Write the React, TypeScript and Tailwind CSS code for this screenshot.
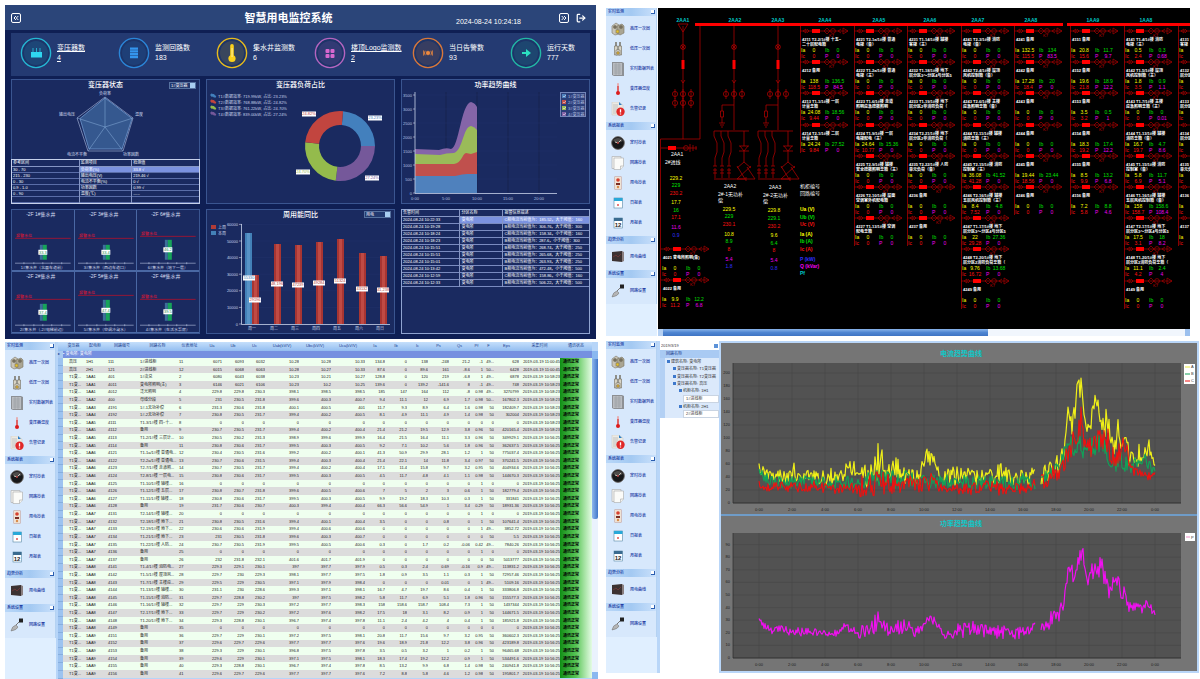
import type { ReactNode } from "react";
import { ChevronsLeft, ChevronsRight, LogOut } from "lucide-react";

/* ---------- dashboard data ---------- */

const stats = [
  { label: "变压器数", value: "4", color: "#25b7d3", icon: "transformer", link: true },
  { label: "监测回路数", value: "183", color: "#2b86d8", icon: "circuit", link: false },
  { label: "集水井监测数", value: "6", color: "#e8bb1d", icon: "thermo", link: false },
  { label: "楼顶Logo监测数", value: "2", color: "#b565c0", icon: "logo", link: true },
  { label: "当日告警数", value: "93", color: "#d9783a", icon: "alarm", link: false },
  { label: "运行天数", value: "777", color: "#22b8a5", icon: "arrow", link: false },
];

const stateRows = [
  ["30 - 70", "负荷率(%)", "33.8 √"],
  ["215 - 230", "输出电压(V)", "219.46 √"],
  ["0 - 30", "电流不平衡(%)", "0 √"],
  ["0.9 - 1.0", "功率因数", "0.99 √"],
  ["0 - 90", "温度(℃)", "-----"],
  ["", "", ""],
];

const shares = [
  { text: "T1#数据效率: 719.99kW, 占比: 23.23%", color: "#4380bd" },
  { text: "T2#数据效率: 768.88kW, 占比: 24.82%", color: "#c2453f" },
  { text: "T3#数据效率: 761.22kW, 占比: 24.70%", color: "#94bb4c" },
  { text: "T4#数据效率: 839.00kW, 占比: 27.24%", color: "#75589a" },
];

const donut = [
  { from: 5, to: 90, color: "#4380bd", label: "23.23%", x: 376, y: 118 },
  { from: 90, to: 187, color: "#75589a", label: "27.24%", x: 373, y: 178 },
  { from: 187, to: 276, color: "#94bb4c", label: "24.70%", x: 304, y: 172 },
  { from: 276, to: 365, color: "#c2453f", label: "24.82%", x: 310, y: 114 },
];

const wells = [
  { title: "-2F 1#集水井", foot: "1#集水井（北面车道前）", line: 28, top: 35, bottom: 50, value: "33.3" },
  { title: "-2F 3#集水井", foot: "3#集水井（西边车道口）", line: 28, top: 35, bottom: 50, value: "33.4" },
  { title: "-2F 6#集水井", foot: "6#集水井（地下一层）", line: 26, top: 30, bottom: 50, value: "46.2" },
  { title: "-2F 2#集水井", foot: "2#集水井（-2#电梯前边）", line: 27, top: 32, bottom: 49, value: "37.4" },
  { title: "-2F 5#集水井", foot: "5#集水井（空调冷凝水）", line: 23, top: 28, bottom: 49, value: "47.4" },
  { title: "-2F 4#集水井", foot: "4#集水井（生活水泵房）", line: 27, top: 31, bottom: 49, value: "39.5" },
];

const weekBars = [
  { x: 253, top: 274, label: "29196", ly: 299, day: "周一" },
  { x: 275, top: 243, label: "48,196", ly: 283, day: "周二" },
  { x: 296, top: 244, label: "47239", ly: 284, day: "周三" },
  { x: 317, top: 241, label: "49284", ly: 282, day: "周四" },
  { x: 338, top: 238, label: "51324", ly: 280, day: "周五" },
  { x: 360, top: 252, label: "43132", ly: 288, day: "周六" },
  { x: 381, top: 255, label: "41,238", ly: 289, day: "周日" },
];

const alarms = [
  ["10:22:33", "C相电流当前值为：185.52，大于阈值：160"],
  ["10:19:28", "B相电流当前值为：306.76，大于阈值：300"],
  ["10:18:24", "C相电流当前值为：158.34，小于阈值：160"],
  ["10:18:23", "B相电流当前值为：287.6，小于阈值：300"],
  ["10:15:51", "B相电流当前值为：268.74，大于阈值：250"],
  ["10:15:51", "B相电流当前值为：265.68，大于阈值：250"],
  ["10:15:01", "B相电流当前值为：263.93，大于阈值：250"],
  ["10:13:42", "B相电流当前值为：472.48，小于阈值：500"],
  ["10:12:59", "C相电流当前值为：158.86，小于阈值：160"],
  ["10:12:33", "B相电流当前值为：506.22，大于阈值：500"],
];

/* ---------- sidebar data ---------- */

const menu = [
  {
    title: "实时监测",
    items: [
      ["高压一次图", "gear"],
      ["低压一次图", "fuse"],
      ["实时数据列表", "cabinet"],
      ["变压器温度", "temp"],
      ["告警记录", "alert"],
    ],
  },
  {
    title: "系统报表",
    items: [
      ["定时抄表", "clock"],
      ["回路抄表", "paper"],
      ["用电抄表", "meter"],
      ["日报表", "day"],
      ["月报表", "month"],
    ],
  },
  { title: "趋势分析", items: [["用电曲线", "screen"]] },
  { title: "系统设置", items: [["回路设置", "plug"]] },
];

/* ---------- single line diagram data ---------- */

// title line 1 | title line 2 | Ia | Ib | Ic | P
const feederColumns = [
  {
    x: 800,
    rows: [
      "4211 T2-2/1#楼 十五~|二十层配电箱|0|0|0|0",
      "4212 备用||138|136.5|118.5|84.5",
      "4213 T1-1/1#楼 一层|计量总箱|24.08|18.56|9.44|0",
      "4214 T2-1/1#楼 二层|计量总箱|24.24|27.52|9.84|0",
    ],
  },
  {
    x: 854,
    rows: [
      "4221 T2-1a/1#楼 普通|电梯（备）|0|0|0|0",
      "4222 T1-2a/1#楼 普通|电梯（主）|0|0|0|0",
      "4223 T1-6/1#楼 走道|照明应急疏散照明|0|0|0|0",
      "4224 T1-9/1#楼 一层|电梯配电（主）|24.64|15.36|10.77|0",
      "4225 T2-9/1#楼 辅楼|安全疏散照明总箱（主）|0|0|0|0",
      "4226 T2-10/1#楼 屋面|空调室外机配电箱|0|0|0|0",
      "4227 T1-13/1#楼 空调|配电总箱|0|0|0|0",
    ],
  },
  {
    x: 907,
    rows: [
      "4231 T1-14/1#楼 辅楼|客梯（主）|0|0|0|0",
      "4232 T1-18/1#楼 地下|层分区3～分区4与分区5|0|0|0|0",
      "4233 T1-19/1#楼 地下|层分区2非消防负荷（|0|0|0|0",
      "4234 T2-21/1#楼 地下|层分区2非消防负荷（|0|0|0|0",
      "4235 T2-22/1#楼 人防|单元负荷（备）|0|0|0|0",
      "4236 备用||0|0|0|0",
      "4237 备用||0|0|0|0",
    ],
  },
  {
    x: 961,
    rows: [
      "4241 T2-3/1#楼 消防|电梯（备）|0|0|0|0",
      "4242 T2-4/1#楼 屋顶|风机控制箱（备）|0|0|0|0",
      "4243 T2-6/1#楼 主楼|应急照明总箱（备）|0|0|0|0",
      "4244 T2-11/1#楼 辅楼|消防总箱（主）|0|0|0|0",
      "4245 T2-15/1#楼 消防|控制室（主）|36.08|41.52|41.28|0",
      "4246 T2-16/1#楼 辅楼|五层风机控制箱（主）|8.4|4.8|7.52|0",
      "4247 T1-17/1#楼 地下|层分区3～分区4与分区5|22|27.36|29.28|0",
      "4248 T2-20/1#楼 地下|层分区2消防负荷总箱（|9.76|13.68|16.72|0",
      "4249 备用||0|0|0|0",
    ],
  },
  {
    x: 1014,
    rows: [
      "4241 备用||132.5|134|115.5|83.5",
      "4242 备用||17.28|20|18.4|0",
      "4243 备用||0|0|0|0",
      "4244 备用||0|0|0|0",
      "4245 备用||19.44|23.44|18.56|0",
      "4246 备用||0|0|0|0",
    ],
  },
  {
    x: 1070,
    rows: [
      "4151 备用||20.8|11.7|15.6|9.7",
      "4152 备用||19.6|18.9|21.8|12.2",
      "4153 备用||3.5|0.5|3.2|1",
      "4154 备用||18.3|17.4|19.2|12.2",
      "4155 备用||8.5|13.2|9.9|6.8",
      "4156 备用||7.2|8.8|5.8|4.6",
    ],
  },
  {
    x: 1124,
    rows: [
      "4141 T1-4/1#楼 消防|电梯（主）|0.5|0.3|2.4|0.68",
      "4142 T1-5/1#楼 屋顶|风机控制箱（主）|1.8|0.9|3.5|1.1",
      "4143 T1-7/1#楼 主楼|应急照明总箱（主）|0|0|0|0.01",
      "4144 T1-13/1#楼 辅楼|消防总箱（备）|16.7|4.7|19.7|8.6",
      "4145 T1-15/1#楼 消防|控制室（备）|5.8|11.7|6.9|5.1",
      "4146 T1-16/1#楼 辅楼|五层风机控制箱（备）|158|158.6|158.7|108.4",
      "4147 T2-17/1#楼 地下|层分区3～分区4与分区5|17.5|18|3.1|8.2",
      "4148 T1-20/1#楼 地下|层分区2消防负荷总箱（|11.1|2.4|4.2|4",
      "4149 备用||0|0|0|0",
    ],
  },
  {
    x: 1178,
    rows: [
      "4131 T2|客梯|0||0|",
      "4132 T2|层分区|3||0|",
      "4133 T2|层分区|0||0|",
      "4134 T1|层分区|0||0|",
      "4135 T1|单元负|0||0|",
      "4136 备用||0||0|",
      "4137 备用||0||0|",
    ],
  },
];

const busLabels: [string, number][] = [
  ["2AA1", 683], ["2AA2", 735], ["2AA3", 778], ["2AA4", 825], ["2AA5", 879],
  ["2AA6", 930], ["2AA7", 978], ["2AA8", 1031], ["1AA9", 1093], ["1AA8", 1146],
];

const Y = "#ffff00";
const G = "#00e000";
const R = "#ff1010";
const M = "#f000f0";
const B = "#3030ff";
const WIRE = "#a80000";

// text | x | y | colour
const readings: [string, number, number, string][] = [
  ["229.2", 676, 180, Y], ["229", 676, 187, G], ["230.2", 676, 195, R],
  ["17.7", 676, 204, Y], ["16", 676, 212, G], ["17.1", 676, 219, R],
  ["11.6", 676, 229, M], ["0.9", 676, 237, B],
  ["229.5", 729, 211, Y], ["229", 729, 218, G], ["230.1", 729, 226, R],
  ["10.8", 729, 236, Y], ["8.9", 729, 243, G], ["8", 729, 251, R],
  ["5.4", 729, 261, M], ["1.8", 729, 268, B],
  ["229.8", 774, 212, Y], ["229.1", 774, 220, G], ["230.2", 774, 228, R],
  ["9.6", 774, 237, Y], ["6.4", 774, 245, G], ["8", 774, 252, R],
  ["5.4", 774, 262, M], ["0.8", 774, 270, B],
];

const keys: [string, number, string][] = [
  ["Ua (V)", 211, Y], ["Ub (V)", 219, G], ["Uc (V)", 226, R],
  ["Ia (A)", 236, Y], ["Ib (A)", 243, G], ["Ic (A)", 251, R],
  ["P (kW)", 261, B], ["Q (kVar)", 268, M], ["Pf", 275, "#00c8c8"],
];

/* ---------- meter table data ---------- */

const columns = [
  { name: "变压器", w: 21 }, { name: "配电柜", w: 22 }, { name: "回路编号", w: 32 },
  { name: "回路名称", w: 39 }, { name: "仪表地址", w: 25 }, { name: "Ua", w: 20 },
  { name: "Ub", w: 22 }, { name: "Uc", w: 21 }, { name: "Uab(kV/V)", w: 34 },
  { name: "Ubc(kV/V)", w: 32 }, { name: "Uca(kV/V)", w: 34 }, { name: "Ia", w: 20 },
  { name: "Ib", w: 22 }, { name: "Ic", w: 21 }, { name: "Ps", w: 21 },
  { name: "Qs", w: 21 }, { name: "Pf", w: 13 }, { name: "F", w: 11 },
  { name: "Eps", w: 25 }, { name: "采集时间", w: 41 }, { name: "通讯状态", w: 32 },
];

const zero = "0|0|0|0|0|0|0|0|0|0|0";
const meterRows = [
  "1H1|111|1#进线柜|6071|6093|6032|10.28|10.28|10.33|134.8|0|138|-248|21.2|-1|49...|628",
  "2H1|121|2#进线柜|6015|6068|6063|10.28|10.27|10.33|87.6|0|89.6|161|-8.6|1|50...|6428",
  "1AA1|401|1#次总|6080|6043|6038|10.23|10.21|10.27|128.8|0|120|219|-6.8|1|49...|6878",
  "1AA1|4011|变电所照明(主)|6146|6021|6106|10.23|10.2|10.25|139.6|0|139.2|-141.6|8|-1|49...|748",
  "1AA1|4012|泛光照明|229.8|229.8|230.3|398.1|398.5|398.5|185|147|164|112|-8|0.98|49...|3270799",
  "1AA2|400|母线分段|231|230.5|231.8|399.6|400.3|400.7|9.4|11.1|12|6.9|1.7|0.98|50...|167802.3",
  "1AA3|4191|1#-1无功补偿|231.3|230.6|231.8|400.1|400.5|401|11.7|9.3|8.9|6.4|1.6|0.98|50|182409.7",
  "1AA4|4192|1#-2无功补偿|230.8|230.5|231.7|399.4|400.2|400.5|8.1|4.9|11.1|4.9|1.4|0.98|50|302004",
  `1AA5|4111|T1-3/1#楼 四~十...|${zero}|0|0|0`,
  "1AA5|4112|备用|230.7|230.5|231.7|399.4|400.2|400.4|21.4|21.2|19.5|12.9|3.8|0.96|50|420165.4",
  "1AA5|4113|T1-2/1#楼 三层计...|230.5|230.2|231.3|398.9|399.6|399.9|16.4|21.5|16.4|11.1|3.3|0.96|50|349929.1",
  "1AA5|4114|备用|230.8|230.6|231.7|399.5|400.3|400.5|9.2|7.1|10.2|5.6|1.8|0.96|50|362637.5",
  "1AA6|4121|T1-1a/1#楼 普通电...|230.4|230.5|231.6|399.2|400.2|400.1|41.3|50.9|29.9|28.1|1.2|1|50|775037.4",
  "1AA6|4122|T2-2a/1#楼 普通电...|230.7|230.6|231.5|399.4|400.3|400.4|21.4|22.1|14|11.8|3.4|0.97|50|370241.5",
  "1AA6|4123|T2-7/1#楼 走道照...|230.7|230.5|231.7|399.4|400.2|400.4|17.1|11.4|15.8|9.7|3.2|0.95|50|404934.6",
  "1AA6|4124|T2-8/1#楼 一层电...|230.8|230.6|231.7|399.5|400.3|400.5|4.5|11.7|4.8|4.1|1.1|0.98|50|144670.3",
  `1AA6|4125|T1-10/1#楼 辅楼...|${zero}|1|0|0`,
  "1AA6|4126|T1-12/1#楼 五层...|230.8|230.7|231.8|399.6|400.5|400.6|7|5|2|3|0.6|1|50|182779.4",
  "1AA6|4127|T1-11/1#楼 辅楼...|230.8|230.6|231.7|399.5|400.3|400.5|9.9|19.2|18.3|10.3|0.3|1|50|331841",
  "1AA6|4128|备用|231.7|230.6|230.7|400.3|399.4|400.4|66.3|56.6|54.9|1|3.4|0.29|50|18931.36",
  `1AA7|4131|T2-14/1#楼 辅楼...|${zero}|1|0|0`,
  "1AA7|4132|T2-18/1#楼 地下...|230.8|230.5|231.6|399.4|400.1|400.4|3.5|0|0|0.8|0|1|50|107641.4",
  "1AA7|4133|T2-19/1#楼 地下...|230.6|230.6|231.9|399.4|400.6|400.6|0|0|0|0|0|1|49...|3852.72",
  "1AA7|4134|T1-21/1#楼 地下...|231|230.5|231.8|399.6|400.3|400.7|0|0|0|0|0|0|50|5.5",
  "1AA7|4135|T1-22/1#楼 人防...|230.7|230.5|231.9|399.5|400.5|400.6|0.3|0|1.7|0.2|-0.06|0.42|49...|7840.26",
  `1AA7|4136|备用|${zero}|1|0|0`,
  "1AA7|4137|备用|232|231.8|232.1|401.6|401.7|401.9|0|0|0|0|0|0|50|5013777",
  "1AA8|4141|T1-4/1#楼 消防电...|229.3|229.1|230.1|397|397.7|397.9|0.5|0.3|2.4|0.69|-0.16|0.9|49...|113831.2",
  "1AA8|4142|T1-5/1#楼 屋顶风...|229.7|230|229.3|398.1|397.7|397.5|1.8|0.9|3.5|1.1|0.3|1|50|72957.46",
  "1AA8|4143|T1-7/1#楼 主楼应...|229.5|229|230.5|397.1|397.9|398.4|0|0|0|0.01|0|1|49...|5109.16",
  "1AA8|4144|T1-13/1#楼 辅楼...|231.1|230|228.6|399.3|397.1|398.1|16.7|4.7|19.7|8.6|0.4|1|50|333806.8",
  "1AA8|4145|T1-15/1#楼 消防...|229.7|228.8|230.2|397|397.5|398.2|5.8|11.7|6.9|5.1|1.8|0.96|50|155577.3",
  "1AA8|4146|T1-16/1#楼 辅楼...|229.7|229|230.3|397.2|397.7|398.3|158|158.6|158.7|108.4|7.3|1|50|1437344",
  "1AA8|4147|T2-17/1#楼 地下...|229.7|229|230.2|397.2|397.6|398.2|17.5|18|3.1|8.2|0.9|1|50|144671.5",
  "1AA8|4148|T1-20/1#楼 地下...|229.3|228.8|230.1|396.7|397.4|397.8|11.1|2.4|4.2|4|0.4|1|50|185921.8",
  `1AA8|4149|备用|${zero}|0|0|0`,
  "1AA9|4151|备用|229.7|229|230.1|397.2|397.5|398.1|20.8|11.7|15.6|9.7|3.2|0.95|50|360602.3",
  "1AA9|4152|备用|229.6|229.7|229.6|397.7|397.7|397.6|19.6|18.9|21.8|12.2|3.8|0.96|50|423189.8",
  "1AA9|4153|备用|229.3|229|230.1|396.8|397.5|397.8|3.5|0.5|3.2|1|0.2|1|50|96465.68",
  "1AA9|4154|备用|229.6|229|230.1|397.1|397.5|398.1|18.3|17.4|19.2|12.2|0.9|1|50|534491.6",
  "1AA9|4155|备用|229.3|228.8|230.1|396.7|397.4|397.8|8.5|13.2|9.9|6.8|1.4|0.98|50|240941.8",
  "1AA9|4156|备用|229.6|229.7|229.6|397.7|397.7|397.6|7.2|8.8|5.8|4.6|1.2|0.98|50|195801.7",
];

const cells = meterRows.map((row, i) => {
  const parts = row.split("|");
  const address = i < 2 ? 11 + i : i;
  const time = i < 2 ? "11:00:45" : i < 10 ? "10:58:23" : "10:56:25";
  return [
    i < 2 ? "高压" : "T1变...",
    ...parts.slice(0, 3),
    String(address),
    ...parts.slice(3),
    `2019-03-19 ${time}`,
  ];
});

/* ---------- trend data ---------- */

// x, mean y, spread
type Key = [number, number, number];

const yellowKeys: Key[] = [
  [759, 469, 7], [775, 477, 9], [800, 476, 8], [840, 479, 9], [846, 466, 12], [852, 468, 14],
  [857, 480, 9], [870, 477, 16], [878, 464, 22], [885, 478, 11], [897, 466, 13], [903, 476, 11],
  [920, 478, 12], [926, 453, 7], [934, 464, 9], [940, 478, 8], [960, 475, 14], [985, 478, 10],
  [1005, 470, 14], [1015, 478, 10], [1035, 477, 9], [1048, 472, 14], [1060, 462, 11], [1065, 448, 12],
  [1068, 418, 15], [1073, 424, 15], [1076, 402, 16], [1079, 388, 17], [1083, 400, 14],
  [1086, 426, 6], [1090, 428, 6], [1095, 403, 18], [1101, 416, 15], [1108, 430, 20],
  [1115, 442, 20], [1126, 450, 16], [1134, 462, 9], [1140, 452, 17], [1149, 450, 13], [1155, 468, 5],
];
const greenKeys: Key[] = [
  [759, 474, 6], [775, 482, 7], [840, 483, 7], [880, 479, 12], [925, 481, 9], [985, 483, 8],
  [1035, 483, 8], [1058, 468, 9], [1068, 447, 11], [1080, 446, 12], [1087, 455, 8], [1098, 443, 12],
  [1104, 443, 12], [1109, 467, 8], [1120, 461, 12], [1130, 468, 9], [1146, 460, 12], [1155, 472, 4],
];
const redKeys: Key[] = [
  [759, 486, 6], [850, 489, 6], [865, 486, 14], [878, 482, 16], [900, 486, 10], [930, 482, 12],
  [940, 489, 6], [985, 488, 9], [1030, 489, 6], [1045, 476, 14], [1060, 474, 8], [1070, 448, 14],
  [1081, 420, 16], [1086, 450, 12], [1098, 442, 17], [1106, 440, 17], [1115, 456, 17],
  [1125, 446, 15], [1131, 470, 8], [1145, 477, 6], [1155, 476, 6],
];
const magentaKeys: Key[] = [
  [759, 622, 4], [768, 629, 5], [800, 632, 5], [838, 633, 4], [850, 626, 7], [856, 635, 6],
  [870, 626, 12], [880, 620, 12], [888, 629, 8], [903, 626, 9], [920, 633, 7], [927, 617, 4],
  [936, 623, 5], [943, 635, 5], [960, 630, 9], [985, 630, 9], [1020, 634, 7], [1035, 626, 6],
  [1046, 622, 11], [1060, 614, 10], [1065, 596, 7], [1068, 572, 10], [1074, 574, 11], [1080, 555, 9],
  [1083, 554, 9], [1087, 582, 6], [1095, 566, 12], [1102, 568, 12], [1109, 592, 10], [1115, 584, 14],
  [1122, 590, 10], [1131, 608, 9], [1142, 608, 6], [1148, 604, 6], [1155, 614, 4],
];

function trendPath(points: Key[], seed: number, skew: number) {
  let s = seed;
  const rand = () => {
    s = (s * 16807) % 2147483647;
    return s / 2147483647;
  };
  let path = "";
  let pen = "M";
  for (let x = 759; x <= 1155; x += 1) {
    if (x > 1035 && x < 1041) {
      pen = "M";
      continue;
    }
    const i = Math.max(1, points.findIndex((p) => p[0] >= x));
    const [x0, y0, a0] = points[i - 1];
    const [x1, y1, a1] = points[i];
    const t = (x - x0) / (x1 - x0);
    const amp = a0 + (a1 - a0) * t;
    const n = rand() * 2 - 1;
    const spike = rand() > 0.86 ? skew * rand() : 0;
    const y = y0 + (y1 - y0) * t + n * amp * 0.85 - spike * amp;
    path += `${pen}${x} ${y.toFixed(1)}`;
    pen = "L";
  }
  return path;
}

/* ---------- dashboard ---------- */

const StatIcon = ({ name, color }: { name: string; color: string }) => (
  <svg viewBox="0 0 32 32" className="size-8 shrink-0">
    <circle cx="16" cy="16" r="14.6" fill="#1d3468" stroke={color} strokeWidth="1.4" />
    <circle cx="16" cy="16" r="12" fill={color} opacity="0.14" />
    {name === "transformer" && (
      <g fill="#2fd6f0">
        <rect x="11" y="15" width="11" height="5.5" />
        <path d="M12.5 11h1v4h-1zM16 11h1v4h-1zM19.5 11h1v4h-1z" opacity="0.7" />
      </g>
    )}
    {name === "circuit" && (
      <g fill="#3496ee">
        <path d="M12 10.5h8v2.2h-8zM12 13.2h8v2.2h-8zM12 15.9h8v2.2h-8zM12 18.6h8v2.6h-8z" />
      </g>
    )}
    {name === "thermo" && (
      <g fill="#fbd01b">
        <rect x="14.2" y="7" width="3.6" height="15" rx="1.8" />
        <circle cx="16" cy="21.5" r="3.6" />
        <rect x="15.6" y="11" width="0.9" height="9" fill="#fff3b0" />
      </g>
    )}
    {name === "logo" && (
      <g fill="#d868cf">
        <rect x="11.5" y="12" width="4" height="4" rx="1" />
        <rect x="16.5" y="12" width="4" height="4" rx="1" />
        <rect x="11.5" y="17" width="4" height="4" rx="1" />
        <rect x="16.5" y="17" width="4" height="4" rx="1" />
      </g>
    )}
    {name === "alarm" && (
      <g fill="none" stroke="#f08a3e" strokeWidth="0.8">
        <circle cx="16" cy="16" r="1.8" fill="#f08a3e" />
        <path d="M13.2 13.8a3.6 3.6 0 0 0 0 4.4M18.8 13.8a3.6 3.6 0 0 1 0 4.4M11.6 13.4v5.2M20.4 13.4v5.2" />
      </g>
    )}
    {name === "arrow" && <path d="M12 15h4v-3l5 4-5 4v-3h-4z" fill="#2ce0c0" />}
  </svg>
);

const Panel = ({ title, control, children }: { title: string; control?: ReactNode; children: ReactNode }) => (
  <section className="border border-[#3a5590] bg-[#1a2a60]">
    <div className="grid h-[10px] grid-cols-[1fr_auto_1fr] items-center">
      <h2 className="col-start-2 text-[7px] leading-[10px] font-medium">{title}</h2>
      <div className="flex justify-end pr-[3px]">{control}</div>
    </div>
    {children}
  </section>
);

const MiniSelect = ({ label, value }: { label: string; value: string }) => (
  <div className="flex h-[7px] items-center border border-[#56719f]">
    <select aria-label={label} className="w-[20px] appearance-none bg-[#22386f] pl-px text-[4px] leading-[5px] outline-none">
      <option>{value}</option>
    </select>
    <span className="size-[5px] bg-[#a8cdf0]" />
  </div>
);

const ValueTag = ({ x, y, text, color, w = 12 }: { x: number; y: number; text: string; color: string; w?: number }) => (
  <g>
    <rect x={x - w / 2} y={y - 2.5} width={w} height="5" fill="#fff" />
    <text x={x} y={y + 1.4} fontSize="4" textAnchor="middle" fill={color}>{text}</text>
  </g>
);

const arc = (from: number, to: number) => {
  const pt = (deg: number, r: number) => {
    const a = ((deg - 90) * Math.PI) / 180;
    return `${(341 + r * Math.cos(a)).toFixed(2)} ${(146 + r * Math.sin(a)).toFixed(2)}`;
  };
  return `M${pt(from, 35)}A35 35 0 0 1 ${pt(to, 35)}L${pt(to, 21)}A21 21 0 0 0 ${pt(from, 21)}Z`;
};

const RadarPanel = () => (
  <Panel title="变压器状态" control={<MiniSelect label="变压器" value="1#变压器" />}>
    <svg viewBox="12 90 187 70" className="block w-full" fill="#d5def0" fontSize="4">
      <path d="M105 97L133 118L123 151L88 151L77 118Z" fill="none" stroke="#9aa9cf" strokeWidth="0.7" />
      <path d="M105 98L132 118.5L122 149L89 149L80 118.5Z" fill="#35588f" stroke="#6f98cf" strokeWidth="0.8" />
      <path d="M105 127V97M105 127L133 118M105 127L123 151M105 127L88 151M105 127L77 118" stroke="#8ab0dc" strokeWidth="0.5" />
      <text x="105" y="95" textAnchor="middle">负荷率</text>
      <text x="135" y="116">温度</text>
      <text x="131" y="156" textAnchor="middle">功率因数</text>
      <text x="77" y="156" textAnchor="middle">电流不平衡</text>
      <text x="75" y="116" textAnchor="end">输出电压</text>
    </svg>
    <table className="w-full table-fixed border-collapse text-left text-[4px] leading-[5px] outline outline-[#c5d0ea]">
      <thead>
        <tr className="h-[6px]">
          <th className="w-[36%] border-b border-[#8696c4] pl-px font-normal">参考区间</th>
          <th className="w-[28%] border-b border-l border-[#8696c4] pl-px font-normal">监测项目</th>
          <th className="border-b border-l border-[#8696c4] pl-px font-normal">检测值</th>
        </tr>
      </thead>
      <tbody>
        {stateRows.map((row, i) => (
          <tr key={i} className="h-[6px] border-b border-[#5a6da8]">
            {row.map((cell, j) => (
              <td key={j} className={`pl-px ${j > 0 ? "border-l border-[#8696c4]" : ""} ${i === 0 && j > 0 ? "bg-[#7b92e0]" : ""}`}>
                {cell}
              </td>
            ))}
          </tr>
        ))}
      </tbody>
    </table>
  </Panel>
);

const SharePanel = () => (
  <Panel title="变压器负荷占比">
    <svg viewBox="208 90 187 112" className="block w-full" fontSize="4" fill="#c9d3ea">
      {shares.map((s, i) => (
        <g key={s.text}>
          <path d={`M212 ${94 + i * 6}q4 0 5 3l-2 0q-1-1-3-1z`} fill={s.color} stroke={s.color} />
          <text x="219" y={98 + i * 6}>{s.text}</text>
        </g>
      ))}
      {donut.map((d) => (
        <g key={d.label}>
          <path d={arc(d.from, d.to)} fill={d.color} />
          <ValueTag x={d.x} y={d.y} text={d.label} color={d.color} w={14} />
        </g>
      ))}
    </svg>
  </Panel>
);

const PowerPanel = () => (
  <Panel title="功率趋势曲线">
    <svg viewBox="403 90 187 112" className="block w-full" fontSize="4" fill="#b6c3e0">
      <path d="M447 92V193M478 92V193M509 92V193M540 92V193" stroke="#16234f" strokeWidth="1" />
      {[0, 500, 1000, 1500, 2000, 2500, 3000, 3500].map((v, i) => (
        <g key={v}>
          <path d={`M414 ${193 - i * 14}h144`} stroke="#22336a" strokeWidth="0.5" />
          <path d={`M414 ${193 - i * 14}h2`} stroke="#c9d3ea" strokeWidth="0.6" />
          <text x="413" y={194.5 - i * 14} textAnchor="end">{v}</text>
        </g>
      ))}
      <path d="M416 149L440 150Q447 147 452 149C460 148 462 104 472 102Q476 103 478 107V193H416Z" fill="#8565a8" />
      <path d="M416 154L441 155Q447 153 455 153C464 150 464 127 472 126Q476 127 478 130V193H416Z" fill="#9abb59" />
      <path d="M416 164H455C463 163 463 154 467 153L472 154 478 152V193H416Z" fill="#c0504d" />
      <path d="M416 176H456Q464 174 468 174H478V193H416Z" fill="#4f81bd" />
      <path d="M416 92V193.5H558" fill="none" stroke="#c9d3ea" strokeWidth="0.8" />
      {["0:00", "5:00", "10:00", "15:00", "20:00"].map((t, i) => (
        <text key={t} x={416 + i * 31} y="200" textAnchor="middle">{t}</text>
      ))}
      <rect x="561.5" y="92.5" width="25" height="24" fill="#2b3e78" stroke="#7486b8" />
      {["1#变压器", "2#变压器", "3#变压器", "4#变压器"].map((t, i) => (
        <g key={t}>
          <rect x="563" y={94 + i * 6} width="4" height="4" fill={["#4f81bd", "#c0504d", "#9abb59", "#8565a8"][i]} />
          <path d={`M564 ${96 + i * 6}l1 1 2-2`} stroke="#fff" strokeWidth="0.5" fill="none" />
          <text x="569" y={98 + i * 6}>{t}</text>
        </g>
      ))}
    </svg>
  </Panel>
);

const WellsPanel = () => (
  <div className="grid grid-cols-3 gap-px border border-[#3a5590] bg-[#4a68a4]">
    {wells.map((w) => (
      <svg key={w.title} viewBox="0 0 62 61" className="block w-full bg-[#1a2a60]" fontSize="4" fill="#d5def0" textAnchor="middle">
        <text x="29" y="6" fontSize="5">{w.title}</text>
        <text x="4" y={w.line - 1} fill="#ff1028" textAnchor="start">报警水位</text>
        <path d={`M3 ${w.line + 0.5}H59`} stroke="#b3122c" strokeWidth="0.8" />
        <rect x="28" y={w.top} width="3" height={w.bottom - w.top} fill="#3d6f9a" />
        <rect x="31" y={w.top} width="4" height={w.bottom - w.top} fill="#17a35a" />
        <ValueTag x={31} y={(w.top + w.bottom) / 2} text={w.value} color="#178a50" w={9} />
        <path d="M3 53.5H59M12 52.5v2M22 52.5v2M31 52.5v2M40 52.5v2M50 52.5v2" stroke="#b8c5e2" strokeWidth="0.6" />
        <text x="31" y="59">{w.foot}</text>
      </svg>
    ))}
  </div>
);

const WeekPanel = () => (
  <Panel title="周用能同比" control={<MiniSelect label="能源类型" value="用电" />}>
    <svg viewBox="208 219 187 113" className="block w-full" fontSize="4" fill="#c9d3ea">
      <rect x="212" y="224" width="5" height="4" fill="#b03c38" />
      <text x="219" y="228">上周</text>
      <rect x="212" y="230" width="5" height="4" fill="#4381b8" />
      <text x="219" y="234">本周</text>
      {[0, 10000, 20000, 30000, 40000, 50000, 60000].map((v, i) => (
        <g key={v}>
          <path d={`M240 ${323 - i * 16.6}h3`} stroke="#c9d3ea" strokeWidth="0.6" />
          <path d={`M243 ${323 - i * 16.6}h148`} stroke="#22336a" strokeWidth="0.5" />
          <text x="239" y={324.5 - i * 16.6} textAnchor="end">{v}</text>
        </g>
      ))}
      <path d="M242.5 223V323.5H391" fill="none" stroke="#c9d3ea" strokeWidth="0.8" />
      <rect x="246" y="232" width="7" height="91" fill="#4381b8" />
      <rect x="248" y="232" width="3" height="91" fill="#5893c6" />
      {weekBars.map((b) => (
        <g key={b.day}>
          <rect x={b.x} y={b.top} width="7" height={323 - b.top} fill="#a83532" />
          <rect x={b.x + 2} y={b.top} width="3" height={323 - b.top} fill="#bf4a44" />
          <ValueTag x={b.x + 3} y={b.ly} text={b.label} color="#b03c38" />
          <text x={b.x} y="329" textAnchor="middle">{b.day}</text>
        </g>
      ))}
      <ValueTag x={250} y={277} text="55330" color="#4381b8" />
    </svg>
  </Panel>
);

const AlarmPanel = () => (
  <section className="border border-[#8fa3d0] bg-[#1a2a60]">
    <table className="w-full table-fixed border-collapse text-left text-[4px] leading-[6px] whitespace-nowrap">
      <thead>
        <tr className="h-[7px] border-b border-[#8696c4]">
          <th className="w-[31%] pl-px font-normal">告警时间</th>
          <th className="w-[23%] border-l border-[#8696c4] pl-px font-normal">分区名称</th>
          <th className="border-l border-[#8696c4] pl-px font-normal">报警信息描述</th>
        </tr>
      </thead>
      <tbody>
        {alarms.map(([time, text], i) => (
          <tr key={i} className="h-[7px] border-b border-[#7a8bc0]">
            <td className="pl-px">2024-08-24 {time}</td>
            <td className={`border-l border-[#8696c4] pl-px ${i === 0 ? "bg-[#7b92e0]" : ""}`}>变电所</td>
            <td className={`border-l border-[#8696c4] pl-px ${i === 0 ? "bg-[#7b92e0]" : ""}`}>{text}</td>
          </tr>
        ))}
      </tbody>
    </table>
  </section>
);

const Dashboard = () => (
  <section className="mr-[2px] bg-[#0f1f54] pb-[5px] text-white">
    <header className="grid h-[25px] grid-cols-[1fr_auto_1fr] items-center bg-[#2b4579] pr-[10px] pl-[6px]">
      <button aria-label="返回" className="flex size-[10px] items-center justify-center rounded-xs border border-white">
        <ChevronsLeft size={8} strokeWidth={3} />
      </button>
      <h1 className="pr-5 text-[11px] leading-4 font-bold">智慧用电监控系统</h1>
      <div className="flex items-center justify-end">
        <time className="mt-[8px] mr-[38px] text-[7px] leading-[8px] whitespace-nowrap">2024-08-24 10:24:18</time>
        <button aria-label="前进" className="flex size-[10px] items-center justify-center rounded-xs border border-white">
          <ChevronsRight size={8} strokeWidth={3} />
        </button>
        <button aria-label="退出" className="ml-[7px] flex size-[10px] items-center justify-center">
          <LogOut size={10} strokeWidth={3} />
        </button>
      </div>
    </header>
    <div className="mx-[6px] mt-[3px] grid h-[43px] grid-cols-[98fr_98fr_98fr_98fr_98fr_80fr] bg-[#243a72] pl-[9px]">
      {stats.map((s) => (
        <div key={s.label} className="flex h-10 items-center gap-[5px]">
          <StatIcon name={s.icon} color={s.color} />
          <div className="text-[7px] leading-[10px] whitespace-nowrap">
            {s.link ? (
              <a href="#detail" className="block underline">
                <span className="block">{s.label}</span>
                <span>{s.value}</span>
              </a>
            ) : (
              <>
                <p>{s.label}</p>
                <p>{s.value}</p>
              </>
            )}
          </div>
        </div>
      ))}
    </div>
    <div className="mx-[6px] mt-[3px] grid grid-cols-3 gap-x-[6px] gap-y-[5px]">
      <RadarPanel />
      <SharePanel />
      <PowerPanel />
      <WellsPanel />
      <WeekPanel />
      <AlarmPanel />
    </div>
  </section>
);

/* ---------- sidebar ---------- */

const MenuIcon = ({ name }: { name: string }) => (
  <svg viewBox="1 1 14 14" className="size-[14px] shrink-0">
    {name === "gear" && (
      <g stroke="#7b7462" strokeWidth="0.6">
        <path d="M2 5l4-3 3 2v9l-4 1-3-2z" fill="#c9c5b8" />
        <path d="M7 5l5-2 2 2v7l-4 2-3-2z" fill="#aaa592" />
        <circle cx="5" cy="6" r="1.6" fill="#77705e" />
        <circle cx="11" cy="6" r="1.6" fill="#77705e" />
        <rect x="6" y="9" width="3" height="3" fill="#e5c12a" />
      </g>
    )}
    {name === "fuse" && (
      <g stroke="#706a5a" strokeWidth="0.6">
        <path d="M6 1v5M10 1v5" strokeWidth="1.4" />
        <path d="M4.5 5h3v9h-3zM8.5 5h3v9h-3z" fill="#d8d4c6" />
        <path d="M6 9h4v5H6z" fill="#ecece4" />
        <circle cx="8" cy="12" r="1.4" fill="#e5b32a" />
      </g>
    )}
    {name === "cabinet" && (
      <g>
        <path d="M2 1h10l2 1v13H4l-2-1z" fill="#8d9094" />
        <path d="M3 2h9v12H3z" fill="#b9bcc0" />
        <path d="M4 4h7M4 6h7M4 8h7M4 10h7M4 12h7M6 2v12M9 2v12" stroke="#92969b" strokeWidth="0.5" />
      </g>
    )}
    {name === "temp" && (
      <g>
        <rect x="7.2" y="2" width="1.6" height="9" rx="0.8" fill="#e9a0a0" />
        <rect x="7.5" y="5" width="1" height="7" fill="#d81f1f" />
        <circle cx="8" cy="12" r="2" fill="#dc1c1c" />
      </g>
    )}
    {name === "alert" && (
      <g>
        <path d="M2 1h7l4 3v10H2z" fill="#eceae4" stroke="#c9c6bd" strokeWidth="0.5" />
        <path d="M3 4h5M3 6h5M3 8h4M3 10h3M3 12h3" stroke="#a8a8a8" strokeWidth="0.6" />
        <path d="M9 1l3 3H9z" fill="#2b7fc8" />
        <circle cx="10.5" cy="10.8" r="4.2" fill="#e02828" />
        <path d="M10.5 8.2v3.2M10.5 12.4v1" stroke="#fff" strokeWidth="1.3" />
      </g>
    )}
    {name === "clock" && (
      <g>
        <circle cx="8" cy="8" r="6.4" fill="#17181a" stroke="#75706c" strokeWidth="0.8" />
        <path d="M3.2 6a5 4 0 0 1 9.6 0q-5 3-9.6 0" fill="#66625f" opacity="0.7" />
        <path d="M8 8l3-3M8 8l-3-1" stroke="#e8e2d6" strokeWidth="0.8" />
        <circle cx="8" cy="8" r="1" fill="#a33" />
      </g>
    )}
    {name === "paper" && (
      <g fill="#f3f3f0" stroke="#a9a9a9" strokeWidth="0.6">
        <path d="M2 1.5h9v12H2z" />
        <path d="M4 3h9.500v8l-3 3.500H4z" fill="#fbfbf8" />
        <path d="M13.500 11h-3v3.500" />
      </g>
    )}
    {name === "meter" && (
      <g>
        <rect x="4.5" y="1.5" width="7" height="13" rx="0.6" fill="#efe2d4" stroke="#b99" strokeWidth="0.5" />
        <circle cx="8" cy="5" r="1.8" fill="#d7412f" />
        <rect x="6" y="8" width="4" height="2" fill="#7a2d24" />
        <circle cx="8" cy="12" r="1.2" fill="#d98b4a" />
      </g>
    )}
    {(name === "day" || name === "month") && (
      <g>
        <rect x="4" y="3" width="8.500" height="10" fill="#fff" stroke="#5585a3" strokeWidth="0.6" />
        <rect x="4" y="3" width="8.500" height="3" fill={name === "day" ? "#28a8d8" : "#3a6b8f"} />
        {name === "day" ? (
          <circle cx="8" cy="10" r="1" fill="#e05050" />
        ) : (
          <text x="8" y="12" fontSize="6" fontWeight="bold" textAnchor="middle" fill="#222">12</text>
        )}
      </g>
    )}
    {name === "screen" && (
      <g>
        <path d="M2 3l10-1v11L2 12z" fill="#3c3232" />
        <path d="M12 2l2 1v9l-2 1z" fill="#8a7f80" />
        <path d="M3 8l3-2 2 2 3-3" stroke="#8a3a3a" fill="none" strokeWidth="0.6" />
      </g>
    )}
    {name === "plug" && (
      <g>
        <path d="M2 14q1-5 5-6l2 2q-1 3-7 4" fill="#b5b5b5" stroke="#6c6c6c" strokeWidth="0.5" />
        <path d="M7 8l4-4" stroke="#777" strokeWidth="1" />
        <rect x="10" y="1.5" width="4" height="4" fill="#222" />
      </g>
    )}
  </svg>
);

const Sidebar = () => (
  <nav className="w-[51px] shrink-0 bg-[#e0efff] text-[4px] leading-[8px] font-medium text-[#10309c]">
    {menu.map((group) => (
      <div key={group.title} className="border-r border-[#b4d2f2] bg-[#d7e8fc]">
        <h3 className="flex h-[8px] items-center justify-between bg-linear-to-r from-[#b9d7f8] via-[#a3c9f2] to-[#c9e0fb] pl-[2px]">
          {group.title}
          <span className="mr-px size-[4px] border-r border-b border-[#2a5db0] bg-white" />
        </h3>
        <ul className="py-[3px]">
          {group.items.map(([label, icon]) => (
            <li key={label}>
              <a href={`#${icon}`} className="flex h-5 items-center gap-[5px] pl-[5px] whitespace-nowrap">
                <MenuIcon name={icon} />
                {label}
              </a>
            </li>
          ))}
        </ul>
      </div>
    ))}
  </nav>
);

/* ---------- single line diagram ---------- */

const Feeder = ({ x, y, row }: { x: number; y: number; row: string }) => {
  const [title, sub, ia, ib, ic, p] = row.split("|");
  return (
    <g fontSize="5">
      <path
        d={`M${x} ${y}h48M${x + 3} ${y}l3-2v4zM${x + 9} ${y}l-2-2M${x + 9} ${y}l-2 2M${x + 24} ${y}l3-3 3 3-3 3zM${x + 38} ${y}l3-2M${x + 38} ${y}l3 2M${x + 43} ${y - 3}l5 3-5 3z`}
        fill="none"
        stroke={WIRE}
        strokeWidth="0.7"
      />
      <circle cx={x + 33} cy={y} r="2.4" fill="none" stroke={WIRE} strokeWidth="0.7" />
      <rect x={x + 12} y={y - 2} width="8" height="4" fill="#ff0000" />
      <text x={x + 29} y={y + 6} fontSize="4" fill="#c00000">K7</text>
      <text x={x + 2} y={y + 10} fontSize="4" fontWeight="bold" fill="#fff">{title}</text>
      <text x={x + 2} y={y + 15} fontSize="4" fontWeight="bold" fill="#fff">{sub}</text>
      <text x={x + 1} y={y + 21} fill={Y}>Ia</text>
      <text x={x + 14} y={y + 21} fill={Y} textAnchor="middle">{ia}</text>
      <text x={x + 1} y={y + 27} fill={R}>Ic</text>
      <text x={x + 14} y={y + 27} fill={R} textAnchor="middle">{ic}</text>
      {ib && (
        <>
          <text x={x + 25} y={y + 21} fill={G}>Ib</text>
          <text x={x + 38} y={y + 21} fill={G} textAnchor="middle">{ib}</text>
          <text x={x + 25} y={y + 27} fill={M}>P</text>
          <text x={x + 38} y={y + 27} fill={M} textAnchor="middle">{p}</text>
        </>
      )}
    </g>
  );
};

const Riser = ({ x, double }: { x: number; double?: boolean }) => (
  <g fill="none" stroke={WIRE} strokeWidth="0.8">
    <path d={`M${x} 26V${double ? 139 : 130}M${x - 2} 45l2 2 2-2M${x - 2} 49l2-2 2 2M${x - 2} 80l2 3 2-3`} />
    <circle cx={x} cy="47" r="2.4" />
    <rect x={x - 1.5} y="60" width="3" height="9" fill="#ff0000" stroke="none" />
    {(double ? [94, 103] : [94]).map((y) =>
      [-8, 0, 8].map((dx) => (
        <g key={`${y}${dx}`}>
          <circle cx={x + dx} cy={y} r="2.6" />
          <path d={`M${x + dx} ${y - 5}v10`} />
        </g>
      ))
    )}
  </g>
);

const CapacitorBank = ({ x }: { x: number }) => (
  <g fill="none" stroke={WIRE} strokeWidth="0.8">
    <path d={`M${x} 105h-12v6M${x - 13.5} 111h3v6h-3zM${x - 12} 117v6M${x - 15} 123h6M${x - 14} 125h4M${x - 13} 127h2`} />
    <path d={`M${x - 20} 131h35`} />
    {[-20, -13, -6].map((dx) => (
      <path
        key={dx}
        d={`M${x + dx} 131v5l3 7v9l-2 6v8M${x + dx - 1} 166h4M${x + dx + 1} 168v10M${x + dx - 1} 170h4M${x + dx - 1} 173h4`}
      />
    ))}
    <path d={`M${x - 20} 179h32M${x + 12} 177v4`} />
    <path d={`M${x + 10} 131v15M${x + 5} 146h10M${x + 5} 151h10M${x + 6} 146l4 5 4-5M${x + 10} 151v11l-7 6M${x + 10} 162l7 6M${x + 3} 166l8 13M${x + 17} 166l-14 13M${x + 3} 179h18l-8-12`} />
  </g>
);

const Diagram = () => (
  <svg viewBox="658 8 532 321" className="block w-full bg-black">
    {busLabels.map(([name, x]) => (
      <text key={name} x={x} y="22" fontSize="5" fontWeight="bold" textAnchor="middle" fill="#00c8c8">{name}</text>
    ))}
    <path d="M678 24h10l-5 8zM700 26V139H660.5V308M661 148h36M690 144v8M693 145v6M696 146v4" fill="none" stroke={WIRE} strokeWidth="0.8" />
    <circle cx="686" cy="148" r="2.4" fill="none" stroke={WIRE} strokeWidth="0.8" />
    <rect x="668" y="146" width="8" height="4" fill="#ff0000" />
    <Riser x={683} double />
    <Riser x={734} />
    <Riser x={778} />
    <CapacitorBank x={734} />
    <CapacitorBank x={778} />
    {feederColumns.map((col) => (
      <g key={col.x}>
        <path d={`M${col.x + 0.5} 26V${Math.round(28 + col.rows.length * 31.2)}`} stroke={WIRE} strokeWidth="0.8" />
        {col.rows.map((row, i) => (
          <Feeder key={row} x={col.x} y={Math.round(31 + i * 31.2)} row={row} />
        ))}
      </g>
    ))}
    <Feeder x={661} y={249} row="4021 变电所照明(备)||0|0|0|0" />
    <Feeder x={661} y={280} row="4022 备用||9.9|12.2|11.2|6.8" />
    <path d="M695 24.5H1063M1067 24.5H1190" stroke="#ff0000" strokeWidth="3" />
    <g fontSize="5" fill="#fff">
      <text x="671" y="156">2AA1</text>
      <text x="665" y="164">2#进线</text>
      <text x="724" y="188">2AA2</text>
      <text x="718" y="196">2#-1无功补</text>
      <text x="718" y="202">偿</text>
      <text x="769" y="189">2AA3</text>
      <text x="763" y="197">2#-2无功补</text>
      <text x="763" y="203">偿</text>
      <text x="800" y="188">机柜编号</text>
      <text x="800" y="195">回路编号</text>
    </g>
    {readings.map(([text, x, y, fill]) => (
      <text key={`${x}-${y}`} x={x} y={y} fontSize="5" textAnchor="middle" fill={fill}>{text}</text>
    ))}
    {keys.map(([text, y, fill]) => (
      <text key={text} x="800" y={y} fontSize="5" fontWeight="bold" fill={fill}>{text}</text>
    ))}
  </svg>
);

const DiagramWindow = () => (
  <section className="mr-[9px] flex gap-px">
    <Sidebar />
    <div className="flex min-w-0 flex-1 flex-col">
      <Diagram />
      <div className="flex h-[7px] bg-[#f1f6fd]">
        <span className="w-[5px] bg-[#b5d0f2]" />
        <span className="w-[61%] bg-linear-to-b from-[#8ab4ea] via-[#4f86d2] to-[#3f74c4]" />
        <span className="ml-auto w-[5px] bg-[#9cc0ee]" />
      </div>
    </div>
  </section>
);

/* ---------- meter table ---------- */

const MeterWindow = () => (
  <section className="flex bg-[#b7d5f8]">
    <Sidebar />
    <table className="ml-[2px] h-[337px] min-w-0 flex-1 table-fixed border-collapse text-[4px] leading-[6px] whitespace-nowrap text-[#222]">
      <colgroup>
        <col style={{ width: 5 }} />
        {columns.map((c) => (
          <col key={c.name} style={{ width: c.w }} />
        ))}
      </colgroup>
      <thead>
        <tr className="h-[9px] bg-linear-to-b from-[#c5dffb] to-[#93bdf0] text-[#1c3f8f]">
          <th />
          {columns.map((c) => (
            <th key={c.name} className="p-0 font-normal">{c.name}</th>
          ))}
        </tr>
      </thead>
      <tbody>
        <tr className="h-[7px] bg-[#7590e0] text-left text-white">
          <td className="bg-[#a9c8f0] p-0 text-[#1c3f8f]">▸</td>
          <td colSpan={21} className="p-0">▪ 变电所: 变电所</td>
        </tr>
        {cells.map((row, i) => (
          <tr key={i} className={`h-[7px] ${i % 2 ? "bg-[#dcdcdc]" : "bg-[#efffef]"}`}>
            <td className="border-b border-[#86aede] bg-[#9dc3f0] p-0" />
            {row.map((cell, j) => (
              <td
                key={j}
                className={`overflow-hidden p-0 ${j < 5 ? "text-left" : "text-right"} ${j === 0 ? "pl-[6px]" : j < 5 ? "pl-[2px]" : ""}`}
              >
                {cell}
              </td>
            ))}
            <td className="bg-linear-to-r from-[#0c8f14] via-[#55c655] to-[#e4fbe4] bg-clip-padding p-0 pl-[3px] text-left font-bold text-black">
              通讯正常
            </td>
          </tr>
        ))}
      </tbody>
    </table>
    <div className="mt-[9px] flex w-[6px] shrink-0 flex-col bg-[#eaf2fd]">
      <span className="h-[8px] bg-[#8ab8f0]" />
      <span className="h-[160px] rounded-b-xs bg-linear-to-r from-[#8fb8ee] to-[#3f76c8]" />
      <span className="mt-auto h-[7px] bg-[#8ab8f0]" />
    </div>
  </section>
);

/* ---------- trend window ---------- */

const tree = [
  { text: "建筑名称: 变电所", pad: "pl-[2px]", leaf: false },
  { text: "变压器名称: T1变压器", pad: "pl-[8px]", leaf: false },
  { text: "变压器名称: T2变压器", pad: "pl-[8px]", leaf: false },
  { text: "变压器名称: 高压", pad: "pl-[8px]", leaf: false },
  { text: "机柜名称: 1H1", pad: "pl-[14px]", leaf: false },
  { text: "1#进线柜", pad: "pl-[18px]", leaf: true },
  { text: "机柜名称: 2H1", pad: "pl-[14px]", leaf: false },
  { text: "2#进线柜", pad: "pl-[18px]", leaf: true },
];

const hours = ["0:00", "2:00", "4:00", "6:00", "8:00", "10:00", "12:00", "14:00", "16:00", "18:00", "20:00", "22:00", "0:00"];

const Axes = ({ top, bottom, step, unit, count }: { top: number; bottom: number; step: number; unit: number; count: number }) => (
  <g fontSize="4" fill="#1c1c1c">
    <rect x="733" y={top} width="448" height={bottom - top} fill="#525252" />
    {Array.from({ length: count }, (_, i) => (
      <g key={i}>
        <path d={`M733 ${bottom - i * step}h448`} stroke="#474747" strokeWidth="0.6" />
        <text x="730" y={bottom + 1 - i * step} textAnchor="end">{i * unit}</text>
      </g>
    ))}
    {hours.map((h, i) => (
      <g key={i}>
        <path d={`M${759 + i * 33} ${top}V${bottom}`} stroke="#474747" strokeWidth="0.6" />
        <text x={759 + i * 33} y={bottom + 8} textAnchor="middle">{h}</text>
      </g>
    ))}
    <path d={`M733 ${top}V${bottom}H1181`} fill="none" stroke="#2c2c2c" strokeWidth="0.7" />
  </g>
);

const TrendWindow = () => (
  <section className="flex bg-[#b9d6f8] pr-[2px]">
    <Sidebar />
    <div className="ml-[3px] flex w-[59px] shrink-0 flex-col bg-white text-[4px] leading-[7px] text-[#333]">
      <div className="flex h-[9px] items-center bg-white">
        <input aria-label="日期" defaultValue="2019/3/19" className="min-w-0 flex-1 pl-px outline-none" />
        <span className="mr-px size-[4px] bg-[#5c92d8]" />
      </div>
      <div className="h-[8px] bg-[#a9caf3] pl-[6px] text-[#1c3f8f]">回路名称</div>
      <ul className="flex h-[60px] flex-col border-l-[5px] border-[#b3d0f4] bg-[#dbe9fb] whitespace-nowrap">
        {tree.map((node) => (
          <li key={node.text} className={`flex flex-1 items-center ${node.pad}`}>
            {node.leaf ? (
              <span className="flex-1 border border-[#c9d4e2] bg-white pl-[2px] leading-[6px]">{node.text}</span>
            ) : (
              <>
                <span className="mr-px size-[3px] shrink-0 bg-[#3d78cc]" />
                {node.text}
              </>
            )}
          </li>
        ))}
      </ul>
    </div>
    <div className="my-[2px] ml-[2px] flex min-w-0 flex-1 flex-col gap-[2px] bg-[#6f9cc8]">
      <svg viewBox="721 343 476 171" className="block w-full bg-[#757575]" fill="none" strokeLinejoin="round">
        <text x="961" y="356" fontSize="7" fontWeight="bold" textAnchor="middle" fill="#10c8c8">电流趋势曲线</text>
        <Axes top={363} bottom={503} step={13} unit={20} count={11} />
        <path d={trendPath(yellowKeys, 4711, 0.8)} stroke="#f0f018" strokeWidth="1.2" />
        <path d={trendPath(greenKeys, 915, 0.5)} stroke="#12a058" strokeWidth="1.2" />
        <path d={trendPath(redKeys, 2203, 0.5)} stroke="#f01010" strokeWidth="1.1" />
        <rect x="1184" y="364" width="11" height="20" fill="#fff" />
        <path d="M1185 367h5" stroke="#e8e840" />
        <path d="M1185 374h5" stroke="#12a058" />
        <path d="M1185 381h5" stroke="#f01010" />
        <g fontSize="4" fill="#333">
          <text x="1191" y="368">A</text>
          <text x="1191" y="375">B</text>
          <text x="1191" y="382">C</text>
        </g>
      </svg>
      <svg viewBox="721 516 476 155" className="block w-full bg-[#757575]" fill="none" strokeLinejoin="round">
        <text x="961" y="526" fontSize="7" fontWeight="bold" textAnchor="middle" fill="#10c8c8">功率趋势曲线</text>
        <Axes top={533} bottom={658} step={12.6} unit={10} count={10} />
        <path d={trendPath(magentaKeys, 77, 0.4)} stroke="#f010f0" strokeWidth="1.2" />
        <rect x="1185" y="533" width="10" height="8" fill="#fff" />
        <path d="M1186 537h4" stroke="#e040a0" strokeWidth="0.6" />
        <text x="1191" y="539" fontSize="4" fill="#333">P</text>
      </svg>
    </div>
  </section>
);

const App = () => {
  return (
    <main className="grid grid-cols-2 items-start gap-2 bg-white pr-px pl-[5px] font-['Liberation_Sans','Noto_Sans_CJK_SC',sans-serif]">
      <div className="flex flex-col gap-[3px] pt-[5px]">
        <Dashboard />
        <MeterWindow />
      </div>
      <div className="flex flex-col gap-[5px] pt-2">
        <DiagramWindow />
        <TrendWindow />
      </div>
    </main>
  );
};

export default App;
